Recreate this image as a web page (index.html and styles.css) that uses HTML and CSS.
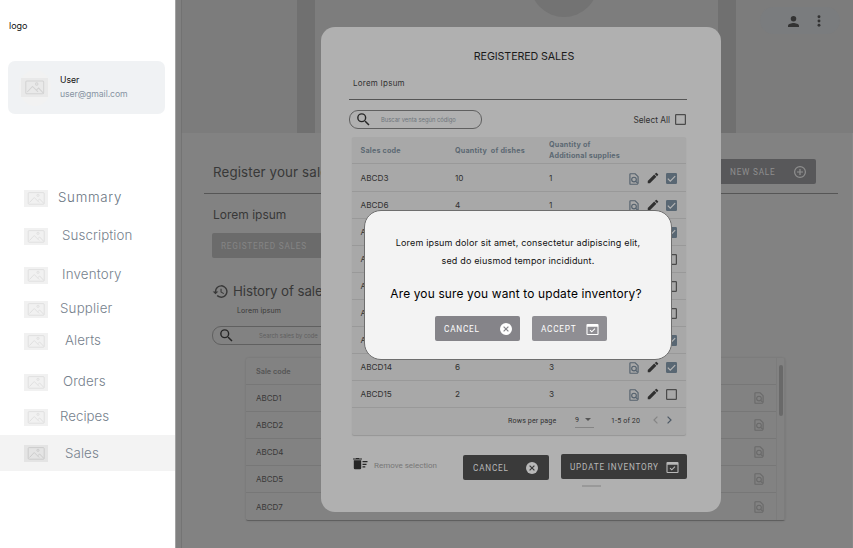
FILE: index.html
```html
<!DOCTYPE html>
<html lang="en">
<head>
<meta charset="utf-8">
<title>Sales</title>
<link rel="stylesheet" href="styles.css">
</head>
<body>
<svg class="defs" aria-hidden="true">
  <symbol id="pic" viewBox="0 0 24 17"><rect class="pic-bg" width="24" height="17"/><g class="pic-line"><rect x="4.2" y="2.6" width="16" height="11.6" rx="1"/><path d="M5.5 12.5l4.7-5 5 5M13.8 10.6l1.9-1.6 4 4.3"/><circle cx="14" cy="5.3" r="1.1"/></g></symbol>
  <symbol id="search" viewBox="0 0 24 24"><path d="M15.5 14h-.79l-.28-.27A6.47 6.47 0 0 0 16 9.5 6.5 6.5 0 1 0 9.5 16c1.61 0 3.09-.59 4.23-1.57l.27.28v.79l5 4.99L20.49 19l-4.99-5zm-6 0a4.5 4.5 0 1 1 0-9 4.5 4.5 0 0 1 0 9z"/></symbol>
  <symbol id="find" viewBox="0 0 24 24"><g fill="none" stroke="currentColor" stroke-width="2"><path d="M18.5 21H6a1 1 0 0 1-1-1V4a1 1 0 0 1 1-1h8l5 5v11"/><circle cx="12" cy="13" r="4"/><path d="M15 16l4.5 4.5"/></g></symbol>
  <symbol id="edit" viewBox="0 0 24 24"><path d="M3 17.25V21h3.75L17.81 9.94l-3.75-3.75L3 17.25zM20.71 7.04a1 1 0 0 0 0-1.41l-2.34-2.34a1 1 0 0 0-1.41 0l-1.83 1.83 3.75 3.75 1.83-1.83z"/></symbol>
  <symbol id="on" viewBox="0 0 18 18"><path d="M16 0H2a2 2 0 0 0-2 2v14c0 1.1.9 2 2 2h14a2 2 0 0 0 2-2V2a2 2 0 0 0-2-2z"/><path class="tick" d="M3 9.2l4 4 8-8"/></symbol>
  <symbol id="off" viewBox="0 0 18 18"><rect x="1" y="1" width="16" height="16" rx="1" fill="none" stroke="currentColor" stroke-width="2"/></symbol>
  <symbol id="cancel" viewBox="0 0 20 20"><circle cx="10" cy="10" r="10"/><path class="cross" d="M6 6l8 8M14 6l-8 8"/></symbol>
  <symbol id="avail" viewBox="0 0 22 20"><path fill-rule="evenodd" d="M2 0h18a2 2 0 0 1 2 2v16a2 2 0 0 1-2 2H2a2 2 0 0 1-2-2V2a2 2 0 0 1 2-2zm0 5v13h18V5z"/><path d="M6.5 11l3.2 3.2 5.8-5.7" fill="none" stroke="currentColor" stroke-width="2"/></symbol>
  <symbol id="history" viewBox="0 0 24 24"><path d="M13 3a9 9 0 0 0-9 9H1l3.890 3.890.07.140L9 12H6a7 7 0 1 1 2.060 4.940l-1.420 1.420A9 9 0 1 0 13 3zm-1 5v5l4.280 2.540.72-1.210-3.500-2.080V8H12z"/></symbol>
</svg>

<aside class="sidebar">
  <div class="logo">logo</div>
  <div class="user">
    <span class="avatar"><svg class="pic"><use href="#pic"/></svg></span>
    <div><div class="user-name">User</div><div class="user-mail">user@gmail.com</div></div>
  </div>
  <nav class="nav">
    <a class="item summary"><svg class="pic"><use href="#pic"/></svg><span>Summary</span></a>
    <a class="item suscription"><svg class="pic"><use href="#pic"/></svg><span>Suscription</span></a>
    <a class="item inventory"><svg class="pic"><use href="#pic"/></svg><span>Inventory</span></a>
    <a class="item supplier"><svg class="pic"><use href="#pic"/></svg><span>Supplier</span></a>
    <a class="item alerts"><svg class="pic"><use href="#pic"/></svg><span>Alerts</span></a>
    <a class="item orders"><svg class="pic"><use href="#pic"/></svg><span>Orders</span></a>
    <a class="item recipes"><svg class="pic"><use href="#pic"/></svg><span>Recipes</span></a>
    <a class="item sales"><svg class="pic"><use href="#pic"/></svg><span>Sales</span></a>
  </nav>
</aside>

<main class="page">
  <header class="hero">
    <div class="hero-art"><i></i></div>
    <div class="tools">
      <svg class="person" viewBox="0 0 16 16"><circle cx="8" cy="4" r="4"/><path d="M0 16v-2c0-2.700 5.300-4 8-4s8 1.300 8 4v2z"/></svg>
      <svg class="dots" viewBox="0 0 4 14"><circle cx="2" cy="2" r="1.700"/><circle cx="2" cy="7" r="1.700"/><circle cx="2" cy="12" r="1.700"/></svg>
    </div>
  </header>
  <section class="content">
    <div class="title-row">
      <h1>Register your sales</h1>
      <button class="new-sale">NEW SALE<svg viewBox="0 0 20 20"><g fill="none" stroke="currentColor" stroke-width="2"><circle cx="10" cy="10" r="9"/><path d="M10 5v10M5 10h10"/></g></svg></button>
    </div>
    <h2>Lorem ipsum</h2>
    <button class="registered">REGISTERED SALES</button>
    <h1 class="history"><svg><use href="#history"/></svg>History of sales</h1>
    <p class="note">Lorem ipsum</p>
    <div class="search back-search"><svg><use href="#search"/></svg><span>Search sales by code</span></div>
    <div class="history-table">
      <div class="rows">
        <div class="hrow hhead">Sale code</div>
        <div class="hrow">ABCD1<svg><use href="#find"/></svg></div>
        <div class="hrow">ABCD2<svg><use href="#find"/></svg></div>
        <div class="hrow">ABCD4<svg><use href="#find"/></svg></div>
        <div class="hrow">ABCD5<svg><use href="#find"/></svg></div>
        <div class="hrow">ABCD7<svg><use href="#find"/></svg></div>
      </div>
      <div class="track"><i></i></div>
    </div>
  </section>
</main>

<section class="modal">
  <h3>REGISTERED SALES</h3>
  <p class="lead">Lorem Ipsum</p>
  <div class="filter">
    <div class="search"><svg><use href="#search"/></svg><span>Buscar venta según código</span></div>
    <label>Select All<svg><use href="#off"/></svg></label>
  </div>
  <div class="table">
    <div class="row head"><span>Sales code</span><span>Quantity&nbsp; of dishes</span><span>Quantity of<br>Additional supplies</span></div>
    <div class="row first"><span>ABCD3</span><span>10</span><span>1</span><svg class="f"><use href="#find"/></svg><svg class="e"><use href="#edit"/></svg><svg class="c on"><use href="#on"/></svg></div>
    <div class="row"><span>ABCD6</span><span>4</span><span>1</span><svg class="f"><use href="#find"/></svg><svg class="e"><use href="#edit"/></svg><svg class="c on"><use href="#on"/></svg></div>
    <div class="row"><span>A</span><span></span><span></span><i></i><i></i><svg class="c on"><use href="#on"/></svg></div>
    <div class="row"><span>A</span><span></span><span></span><i></i><i></i><svg class="c"><use href="#off"/></svg></div>
    <div class="row"><span>A</span><span></span><span></span><i></i><i></i><svg class="c"><use href="#off"/></svg></div>
    <div class="row"><span>A</span><span></span><span></span><i></i><i></i><svg class="c"><use href="#off"/></svg></div>
    <div class="row"><span>A</span><span></span><span></span><i></i><i></i><svg class="c on"><use href="#on"/></svg></div>
    <div class="row"><span>ABCD14</span><span>6</span><span>3</span><svg class="f"><use href="#find"/></svg><svg class="e"><use href="#edit"/></svg><svg class="c on"><use href="#on"/></svg></div>
    <div class="row"><span>ABCD15</span><span>2</span><span>3</span><svg class="f"><use href="#find"/></svg><svg class="e"><use href="#edit"/></svg><svg class="c"><use href="#off"/></svg></div>
    <div class="pager">
      <span class="per">Rows per page</span>
      <span class="size">9<i></i></span>
      <span class="range">1-5 of 20</span>
      <svg class="prev" viewBox="0 0 5 8"><path d="M4.400.6L1 4l3.400 3.400"/></svg>
      <svg class="next" viewBox="0 0 5 8"><path d="M.6.6L4 4 .6 7.400"/></svg>
    </div>
  </div>
  <footer class="actions">
    <div class="remove"><svg viewBox="0 0 15 12"><path d="M.8 2.200h7.400V10a1.200 1.200 0 0 1-1.200 1.200H2A1.200 1.200 0 0 1 .8 10zM0 .6h2.700L3.200 0h2.600l.5.600H9v1H0zM9.500 3h5v1.200h-5zM9.500 5.700h4v1.200h-4zM9.500 8.300h2.800v1.200H9.500z"/></svg><span>Remove selection</span></div>
    <button class="dark cancel">CANCEL<svg class="ic-x"><use href="#cancel"/></svg></button>
    <button class="dark update">UPDATE INVENTORY<svg class="ic-a"><use href="#avail"/></svg></button>
  </footer>
  <div class="handle"></div>
</section>

<section class="dialog">
  <p>Lorem ipsum dolor sit amet, consectetur adipiscing elit,<br><span>sed do eiusmod tempor incididunt.</span></p>
  <h4>Are you sure you want to update inventory?</h4>
  <div class="choices">
    <button class="no">CANCEL<svg class="ic-x"><use href="#cancel"/></svg></button>
    <button class="yes">ACCEPT<svg class="ic-a"><use href="#avail"/></svg></button>
  </div>
</section>
</body>
</html>
```
FILE: styles.css
```css
* { box-sizing: border-box; }
body { margin: 0; width: 853px; height: 548px; overflow: hidden; position: relative; display: flex; background: #828282; font-family: Inter, "Liberation Sans", sans-serif; white-space: nowrap; }
h1, h2, h3, h4, p { margin: 0; font-weight: 400; }
button { border: 0; padding: 0; margin: 0; font-family: Roboto, sans-serif; font-size: 8.2px; font-weight: 400; letter-spacing: .8px; text-align: left; display: flex; align-items: center; justify-content: space-between; border-radius: 2px; }
svg { display: block; fill: currentColor; flex: none; }
.defs { position: absolute; width: 0; height: 0; }

/* Sidebar */
.sidebar { width: 175px; height: 548px; background: #fff; flex: none; }
.logo { height: 61px; padding: 19px 0 0 9px; font-size: 9px; line-height: 14px; color: #111; }
.user { width: 157px; height: 53px; margin-left: 8px; background: #f0f2f4; border-radius: 7px; display: flex; align-items: center; }
.avatar { width: 32px; height: 36px; margin: 0 9px 0 11px; border-radius: 50%; background: #f2f2f2; display: grid; place-items: center; }
.avatar .pic { width: 27px; height: 19px; margin-left: -1px; color: #d3d3d3; --bg: #e9e9e9; }
.user-name { font-size: 8.7px; line-height: 15px; color: #111; }
.user-mail { font-size: 8.7px; line-height: 15px; margin-top: -1px; color: #8794a3; letter-spacing: -.08px; }
.pic { width: 24px; height: 17px; color: #dedede; --bg: #f1f1f1; }
.pic-bg { fill: var(--bg); }
.pic-line { fill: none; stroke: currentColor; stroke-width: .9; }
.nav { padding-top: 68px; }
.item { height: 32px; padding-left: 24px; display: flex; align-items: center; font-size: 13.3px; font-weight: 300; color: #76818d; }
.item span { margin: -2px 0 0 10px; letter-spacing: .1px; }
.item.summary span { letter-spacing: .7px; color: #68747f; }
.item.suscription { margin-top: 6px; }
.item.inventory { margin-top: 7px; }
.item.supplier { margin-top: 2px; }
.item.orders { margin-top: 9px; }
.item.recipes { margin-top: 3px; }
.item.sales { margin-top: 2px; height: 36px; background: #f3f3f3; }
.item.sales .pic { color: #c8c8c8; --bg: #e4e4e4; }
.item.suscription span, .item.inventory span { margin-left: 14px; }
.item.supplier span, .item.recipes span { margin-left: 12px; }
.item.supplier span, .item.inventory span { letter-spacing: .2px; }
.item.recipes span { letter-spacing: 0; }
.item.alerts span, .item.sales span { margin-left: 17px; }
.item.sales span { margin-top: 0; }
.item.orders span { margin-left: 15px; }

/* Dimmed page */
.page { width: 678px; border-left: 1px solid #a2a2a2; padding-left: 5px; background: #808080; }
.hero { height: 133px; background: #7c7c7c; border-left: 1px solid #727272; display: flex; }
.hero-art { width: 439px; margin-left: 115px; border: solid #707070; border-width: 0 18px; background: #7d7d7d; overflow: hidden; }
.hero-art i { display: block; width: 68px; height: 68px; margin: -51px 0 0 215px; border-radius: 50%; background: #737373; }
.tools { width: 80px; height: 27px; margin: 7px 0 0 24px; border-radius: 14px; background: #7a7c7e; display: flex; align-items: center; color: #333; }
.person { width: 11px; height: 11px; margin: 1px 0 0 28px; }
.dots { width: 4px; height: 12px; margin-left: 18px; }
.content { height: 415px; background: #828282; border-left: 1px solid #747474; border-right: 1px solid #888; padding-left: 22px; color: #383838; }
.title-row { width: 634px; height: 61px; border-bottom: 1px solid #565656; padding: 18px 22px 0 8px; display: flex; align-items: center; justify-content: space-between; }
h1 { font-size: 13.3px; line-height: 18px; font-weight: 400; }
.new-sale { width: 108px; height: 25px; margin-top: -1px; padding: 0 10px 0 22px; background: #58585a; color: #8f8f8f; }
.new-sale svg { width: 12px; height: 12px; }
.title-row h1 { letter-spacing: .15px; padding-left: 1px; }
h2 { margin: 12px 0 0 9px; font-size: 12px; line-height: 18px; font-weight: 400; }
.registered { width: 112px; height: 25px; margin: 9px 0 0 8px; padding-left: 9px; background: #6b6b6b; color: #858585; }
.history { margin: 24px 0 0 8px; display: flex; align-items: center; gap: 4px; letter-spacing: -.08px; }
.history svg { width: 17px; height: 17px; }
.note { margin: 5px 0 0 33px; font-size: 7px; line-height: 12px; letter-spacing: .1px; }
.search { width: 133px; height: 19px; border: 1px solid #606060; border-radius: 9px; display: flex; align-items: center; }
.search svg { width: 17px; height: 17px; margin-left: 5px; color: #262626; }
.search span { margin-left: 9px; font-size: 5.8px; color: #6e757b; }
.back-search { margin: 9px 0 0 8px; }
.back-search span { margin-left: 24px; color: #606060; }
.history-table { width: 539px; height: 163px; margin: 13px 0 0 42px; border-bottom: 1px solid #5f5f5f; box-shadow: 0 0 2px rgba(0,0,0,.15); display: flex; border-radius: 2px; }
.rows { width: 530px; }
.hrow { height: 27px; padding: 0 10px 0 10px; display: flex; align-items: center; justify-content: space-between; border-bottom: 1px solid #777; font-size: 8px; }
.hhead { font-size: 7.3px; font-weight: 600; color: #555; }
.hrow:last-child { border: 0; }
.hrow svg { width: 14px; height: 14px; color: #6a6a6a; }
.track { width: 9px; border: solid #7c7c7c; border-width: 0 1px; padding: 7px 0 0 2px; }
.track i { display: block; width: 4px; height: 51px; border-radius: 2px; background: #696969; }

/* Registered sales modal */
.modal { position: absolute; left: 321px; top: 27px; width: 400px; height: 485px; border-radius: 14px; background: #b0b0b0; padding: 0 34px 0 28px; color: #303030; }
h3 { height: 39px; padding: 22px 0 0 12px; text-align: center; font-size: 10.7px; line-height: 16px; letter-spacing: -.1px; color: #191919; }
.lead { height: 34px; padding: 10px 0 0 4px; border-bottom: 1px solid #555; font-size: 8px; line-height: 14px; letter-spacing: .25px; }
.filter { height: 37px; padding: 2px 1px 0 0; display: flex; align-items: center; justify-content: space-between; }
.filter label { display: flex; align-items: center; gap: 5px; font-size: 8.3px; }
.filter label svg { width: 11px; height: 11px; color: #4b4b4b; }
.table { width: 334px; height: 298px; margin-left: 3px; border-radius: 2px; background: #a8a8a8; box-shadow: 0 1px 1px #969696; }
.row { height: 27px; padding-left: 8.5px; border-bottom: 1px solid #999; display: grid; grid-template-columns: 94.5px 94px 80px 18px 19px 11px; align-items: center; font-size: 8.2px; }
.row.first { height: 28px; }
.row.head { font-size: 7.2px; line-height: 11px; font-weight: 700; color: #5c6873; letter-spacing: .2px; }
.row .f { width: 14px; height: 14px; margin: 2px 0 0 -2px; color: #55626e; }
.row .e { width: 14px; height: 14px; margin: 0 0 0 -1px; }
.row .c { width: 11px; height: 11px; margin-top: 1px; color: #4b4b4b; }
.row .on { color: #596773; }
.tick { fill: none; stroke: #b5b5b5; stroke-width: 2; }
.pager { height: 27px; padding: 0 10px 3px 156px; display: flex; align-items: center; font: 7.1px Roboto, sans-serif; letter-spacing: .13px; }
.per { width: 67px; }
.size { width: 19px; height: 16px; border-bottom: 1px solid #858585; display: flex; align-items: center; justify-content: space-between; }
.size i { border: solid transparent; border-width: 3px 3px 0; border-top-color: #555; margin-right: 3px; }
.range { width: 42px; margin-left: 17px; }
.prev, .next { width: 5px; height: 8px; fill: none; stroke: #858585; stroke-width: 1.2; }
.next { margin-left: 9px; stroke: #4d5965; }
.actions { margin-top: 19px; height: 26px; display: flex; }
.remove { width: 114px; padding: 4px 0 0 4px; display: flex; }
.remove svg { width: 15px; height: 12px; color: #262626; }
.remove span { margin: 1px 0 0 6px; font: 8px/13px Roboto, sans-serif; color: #777; }
.dark { height: 25px; background: #3a3a3a; color: #b8b8b8; --bg: #3a3a3a; }
.cancel { width: 86px; margin: 1px 12px 0 0; padding: 0 11px 0 10px; }
.update { width: 126px; padding: 0 8px 0 9px; }
.ic-x { width: 12px; height: 12px; }
.ic-a { width: 13px; height: 11px; margin-top: 2px; }
.cross { fill: none; stroke: var(--bg); stroke-width: 2; }
.handle { width: 19px; height: 2px; margin: 5px 0 0 233px; background: #999; }

/* Confirmation dialog */
.dialog { position: absolute; left: 364px; top: 210px; width: 308px; height: 150px; border: 1px solid #6e6e6e; border-radius: 17px; background: #f3f3f3; text-align: center; color: #111; }
.dialog p { margin-top: 23px; font-size: 9px; line-height: 18px; letter-spacing: .17px; }
h4 { margin: 15px 4px 0 0; font-size: 11.9px; line-height: 18px; letter-spacing: .17px; color: #000; }
.choices { display: flex; gap: 12px; margin: 13px 0 0 70px; }
.choices button { height: 25px; color: #fff; }
.no { width: 85px; padding: 0 8px 0 9px; background: #858489; --bg: #858489; }
.yes { width: 75px; padding: 0 8px 0 9px; background: #8f8e93; }
```
